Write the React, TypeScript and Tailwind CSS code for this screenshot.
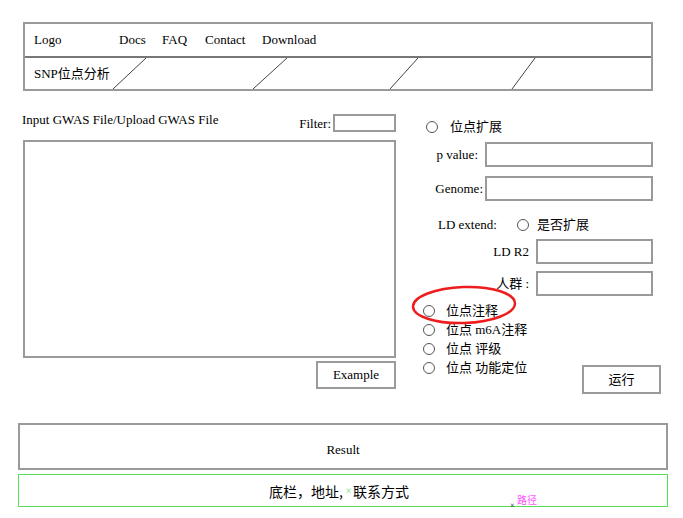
export default function App() {
  const radio = "w-[12px] h-[12px] rounded-full border border-[#555] bg-white shrink-0";
  const box = "border-2 border-[#9a9a9a] bg-white";
  return (
    <div className="relative w-[683px] h-[518px] overflow-hidden bg-white pt-[22px] text-[13px] leading-[16px] text-black font-['Liberation_Serif','Noto_Sans_CJK_SC',serif]">
      {/* header */}
      <div className="ml-[23px] w-[630px] border-2 border-[#9a9a9a]">
        <div className="flex h-[32px] items-center pl-[9px]">
          <span className="w-[85px]">Logo</span>
          <span className="w-[43px]">Docs</span>
          <span className="w-[43px]">FAQ</span>
          <span className="w-[57px]">Contact</span>
          <span>Download</span>
        </div>
        <div className="h-[2px] bg-[#777]" />
        <div className="relative flex h-[31px] items-center pl-[9px]">
          <span>SNP位点分析</span>
          <svg className="absolute left-0 top-0 overflow-visible" width="626" height="31">
            <g stroke="#444" strokeWidth="1">
              <line x1="121" y1="0" x2="88" y2="31" />
              <line x1="262" y1="0" x2="228" y2="31" />
              <line x1="393" y1="0" x2="365" y2="31" />
              <line x1="510" y1="0" x2="487" y2="31" />
            </g>
          </svg>
        </div>
      </div>

      {/* main */}
      <div className="mt-[22px] flex">
        {/* left */}
        <div className="ml-[22px] w-[374px]">
          <div className="flex h-[20px] items-start justify-between">
            <span className="mt-[-1px]">Input GWAS File/Upload GWAS File</span>
            <div className="flex items-center">
              <span className="mt-[2px]">Filter:</span>
              <div className={`ml-[2px] mt-[1px] h-[18px] w-[63px] ${box}`} />
            </div>
          </div>
          <div className={`ml-[1px] mt-[7px] h-[218px] w-[373px] ${box}`} />
          <div className="mt-[3px] flex justify-end">
            <div className={`flex h-[28px] w-[80px] items-center justify-center ${box}`}>Example</div>
          </div>
        </div>

        {/* right */}
        <div className="ml-[17px] w-[248px]">
          <div className="flex h-[28px] items-center pl-[13px]">
            <span className={radio} />
            <span className="ml-[12px]">位点扩展</span>
          </div>
          <div className="mt-[1px] flex items-center">
            <span className="w-[70px] pr-[5px] text-right">p value:</span>
            <div className={`ml-[2px] h-[25px] w-[168px] ${box}`} />
          </div>
          <div className="mt-[9px] flex items-center">
            <span className="w-[70px] text-right">Genome:</span>
            <div className={`ml-[2px] h-[25px] w-[168px] ${box}`} />
          </div>
          <div className="mt-[14px] flex h-[20px] items-center pl-[25px]">
            <span className="w-[79px]">LD extend:</span>
            <span className={radio} />
            <span className="ml-[8px]">是否扩展</span>
          </div>
          <div className="mt-[4px] flex items-center">
            <span className="w-[116px] text-right">LD R2</span>
            <div className={`ml-[7px] h-[25px] w-[117px] ${box}`} />
          </div>
          <div className="mt-[7px] flex items-center">
            <span className="w-[116px] text-right">人群 :</span>
            <div className={`ml-[7px] h-[25px] w-[117px] ${box}`} />
          </div>
          <div className="mt-[6px] flex items-end">
            <div className="pl-[10px]">
              <div className="flex h-[18px] items-center">
                <span className={radio} />
                <span className="ml-[11px]">位点注释</span>
              </div>
              <div className="flex h-[19px] items-center">
                <span className={radio} />
                <span className="ml-[11px]">位点 m6A注释</span>
              </div>
              <div className="flex h-[19px] items-center">
                <span className={radio} />
                <span className="ml-[11px]">位点 评级</span>
              </div>
              <div className="flex h-[20px] items-center">
                <span className={radio} />
                <span className="ml-[11px]">位点 功能定位</span>
              </div>
            </div>
            <div className={`ml-auto mb-[-16px] flex h-[29px] w-[79px] items-center justify-center ${box}`}>运行</div>
          </div>
        </div>
      </div>

      {/* result */}
      <div className={`ml-[18px] mt-[34px] flex h-[47px] w-[650px] items-center justify-center pt-[6px] ${box}`}>Result</div>

      {/* footer */}
      <div className="ml-[18px] mt-[4px] flex h-[33px] w-[650px] items-center justify-center border border-[#55e055] bg-white pr-[8px] text-[14px] font-['Noto_Sans_CJK_SC',sans-serif]">
        底栏，地址<span className="inline-block w-[6px]">,</span><span className="text-[7px] leading-[7px] text-[#33dd33]">×</span><span className="ml-[1px]">联系方式</span>
      </div>

      {/* annotations */}
      <svg className="absolute left-[408px] top-[282px]" width="112" height="46">
        <ellipse cx="56" cy="23" rx="51" ry="18" fill="none" stroke="#ee1c1c" strokeWidth="2.5" transform="rotate(-2 56 23)" />
      </svg>
      <span className="absolute left-[517px] top-[494px] text-[10px] leading-[12px] text-[#ff55ff] font-['Noto_Sans_CJK_SC',sans-serif]">路径</span>
      <span className="absolute left-[510px] top-[502px] text-[8px] leading-[8px] text-black">×</span>
    </div>
  );
}
